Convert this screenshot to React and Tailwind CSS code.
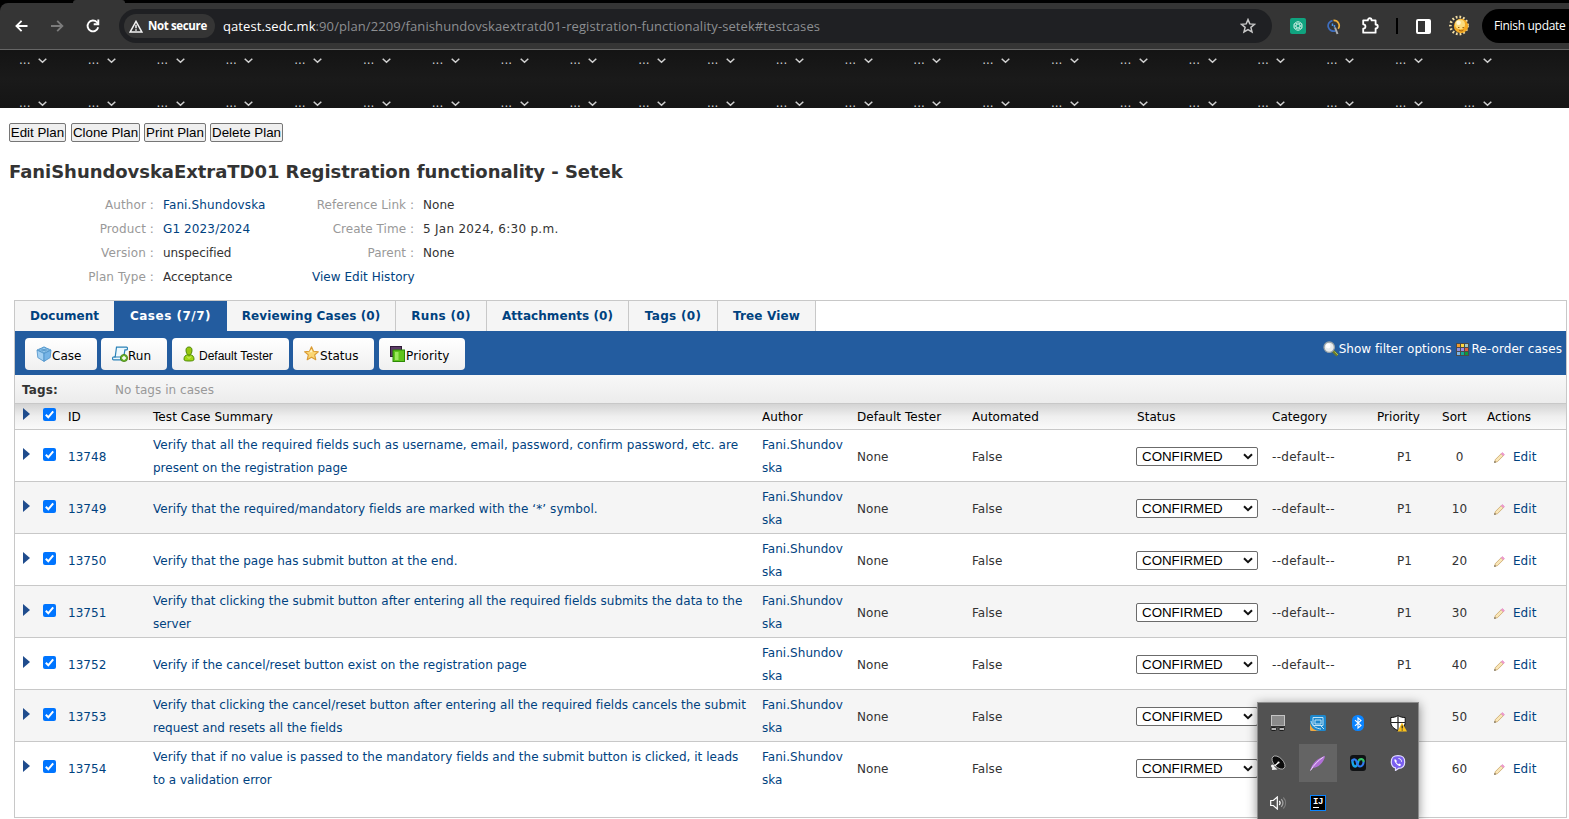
import { Fragment } from "react";

const NAV = Array.from({ length: 22 }, (_, i) => i);

const CASES = [
  { id: 13748, lines: ["Verify that all the required fields such as username, email, password, confirm password, etc. are", "present on the registration page"], sort: 0 },
  { id: 13749, lines: ["Verify that the required/mandatory fields are marked with the ‘*’ symbol."], sort: 10 },
  { id: 13750, lines: ["Verify that the page has submit button at the end."], sort: 20 },
  { id: 13751, lines: ["Verify that clicking the submit button after entering all the required fields submits the data to the", "server"], sort: 30 },
  { id: 13752, lines: ["Verify if the cancel/reset button exist on the registration page"], sort: 40 },
  { id: 13753, lines: ["Verify that clicking the cancel/reset button after entering all the required fields cancels the submit", "request and resets all the fields"], sort: 50 },
  { id: 13754, lines: ["Verify that if no value is passed to the mandatory fields and the submit button is clicked, it leads", "to a validation error"], sort: 60 },
];

const SUMMARY_TRACKING = {
  13748: "tracking-[0.06px]",
  13749: "tracking-[0.075px]",
  13750: "tracking-[0.04px]",
  13751: "tracking-[0.03px]",
  13752: "tracking-[0.045px]",
  13753: "tracking-[0.02px]",
  13754: "tracking-[0.035px]",
};

const TABS = [
  ["Document", "w-[99px]"],
  ["Cases (7/7)", "w-[113px] tracking-[0.5px]"],
  ["Reviewing Cases (0)", "w-[169px] tracking-[0.09px]"],
  ["Runs (0)", "w-[91px] tracking-[0.3px]"],
  ["Attachments (0)", "w-[142px] tracking-[0.07px]"],
  ["Tags (0)", "w-[89px] tracking-[0.3px]"],
  ["Tree View", "w-[98px] tracking-[0.15px]"],
];

function Chevron({ className }) {
  return (
    <svg className={className} width="9" height="6" viewBox="0 0 9 6" fill="none" stroke="#d0d0d0" strokeWidth="1.5">
      <path d="M0.7 0.7 4.5 4.3 8.3 0.7" />
    </svg>
  );
}

function NavRow({ className }) {
  return (
    <div className={`flex ${className}`}>
      {NAV.map((i) => (
        <div key={i} className="flex w-[68.8px] shrink-0 items-start">
          <span className="-mt-[4px] w-[19px] leading-[12px] tracking-normal text-[#d0d0d0]">...</span>
          <Chevron />
        </div>
      ))}
    </div>
  );
}

function BrowserBar() {
  return (
    <div className="h-[50px] bg-black font-['Open_Sans',sans-serif]">
      <div className="flex h-[3px]">
        <div className="ml-[73px] h-[3px] w-[52px] rounded-t-sm bg-[#353535]" />
      </div>
      <div className="flex h-[47px] items-start rounded-tl-[8px] border-b border-[#666] bg-[#353535]">
        <svg className="mt-[17px] ml-[15px]" width="13" height="12" viewBox="0 0 13 12" fill="none" stroke="#fff" strokeWidth="1.8">
          <path d="M12.5 6H1.5M6.6 .8 1.4 6l5.2 5.2" />
        </svg>
        <svg className="mt-[17px] ml-[23px]" width="13" height="12" viewBox="0 0 13 12" fill="none" stroke="#7c7c7c" strokeWidth="1.8">
          <path d="M0 6h11.5M6.2 .8 11.4 6 6.2 11.2" />
        </svg>
        <svg className="mt-[16px] ml-[22px]" width="14" height="14" viewBox="0 0 14 14" fill="none" stroke="#fff" strokeWidth="1.9">
          <path d="M12.2 8.3A5.4 5.4 0 1 1 10.9 3.2L12 4.4" />
          <path d="M12.3 .6v4.6H7.7" />
        </svg>
        <div className="mt-[6px] ml-[19px] flex h-[34px] w-[1153px] items-center rounded-full bg-[#1f2023] pl-[5px]">
          <div className="flex h-[24px] w-[91px] items-center rounded-full bg-[#353535] pl-[5px]">
            <svg width="14" height="13" viewBox="0 0 14 13" fill="none" stroke="#f2f2f2" strokeWidth="1.5">
              <path d="M7 1.4 12.8 11.9H1.2Z" />
              <path d="M7 4.8v3.4M7 9.2v1.5" />
            </svg>
            <span className="ml-[5px] text-[11.5px] font-bold tracking-[-0.36px] whitespace-nowrap text-white">Not secure</span>
          </div>
          <div className="ml-[8px] text-[13px] tracking-[0.09px] whitespace-nowrap text-[#8d8f92]">
            <span className="text-white">qatest.sedc.mk</span>:90/plan/2209/fanishundovskaextratd01-registration-functionality-setek#testcases
          </div>
          <svg className="mr-[16px] ml-auto" width="16" height="16" viewBox="0 0 16 16" fill="none" stroke="#c8c8c8" strokeWidth="1.5">
            <path d="m8 1.6 1.8 4.3 4.7.4-3.6 3 1.1 4.6L8 11.5l-4 2.4 1.1-4.6-3.6-3 4.7-.4Z" />
          </svg>
        </div>
        <svg className="mt-[15px] ml-[18px]" width="16" height="16" viewBox="0 0 16 16">
          <rect width="16" height="16" rx="2" fill="#10a37f" />
          <g fill="none" stroke="#b5e6d8" strokeWidth=".8">
            <circle cx="8" cy="8" r="4.3" />
            <ellipse cx="8" cy="8" rx="4.4" ry="1.8" transform="rotate(30 8 8)" />
            <ellipse cx="8" cy="8" rx="4.4" ry="1.8" transform="rotate(90 8 8)" />
            <ellipse cx="8" cy="8" rx="4.4" ry="1.8" transform="rotate(150 8 8)" />
          </g>
        </svg>
        <svg className="mt-[15px] ml-[21px]" width="14" height="18" viewBox="0 0 14 18" fill="none" strokeWidth="1.7">
          <path d="M8.5 12.7A5.3 5.3 0 1 1 5.5 2.600" stroke="#3f6fc0" />
          <path d="M6.500 2.300A5.400 5.400 0 0 1 11.200 10.800" stroke="#eeb13c" />
          <path d="m8 9.500 2.500 6.500" stroke="#a9adb3" strokeWidth="2" />
          <path d="M5.500 5.500v2.500M7.500 7v2.500" stroke="#4d95e8" strokeWidth="1.500" />
        </svg>
        <svg className="mt-[14px] ml-[21px]" width="17" height="17" viewBox="0 0 17 17" fill="none" stroke="#fff" strokeWidth="1.8" strokeLinejoin="round">
          <path d="M1.2 3.4h4.6c0-2.900 3.800-2.900 3.800 0h4v4.100c2.900 0 2.900 3.800 0 3.800v4.400H1.200v-4c3-.3 3-4.200 0-4.400Z" />
        </svg>
        <div className="mt-[15px] ml-[17px] h-[16px] w-[2px] bg-black" />
        <svg className="mt-[16px] ml-[18px]" width="15" height="15" viewBox="0 0 15 15">
          <rect x="1" y="1" width="13" height="13" rx="1" fill="#353535" stroke="#fff" strokeWidth="2" />
          <rect x="9" y="1" width="5" height="13" fill="#fff" />
        </svg>
        <svg className="mt-[12px] ml-[18px]" width="21" height="21" viewBox="0 0 21 21">
          <circle cx="10" cy="10.5" r="8.6" fill="none" stroke="#f4dfa4" strokeWidth="2.600" strokeDasharray="1.700 2" />
          <circle cx="12" cy="11" r="7.200" fill="#f2a922" />
          <circle cx="11" cy="9.400" r="5" fill="#fbdc7c" />
          <circle cx="9.600" cy="7.800" r="2.200" fill="#fff6d4" />
          <path d="M9 12.500h1.400M13.500 12.500h1.400M10 15c1.400 1.200 3 1.200 4.400 0" stroke="#9a5a10" strokeWidth="1" fill="none" />
        </svg>
        <div className="mt-[6px] ml-[12px] flex h-[34px] flex-1 items-center rounded-l-full bg-black pl-[12px] text-[12px] tracking-[-0.32px] whitespace-nowrap text-white">
          Finish update
        </div>
      </div>
    </div>
  );
}

function PlanButton({ children, className }) {
  return (
    <button className={`flex h-[19px] items-center justify-center rounded-[2px] border border-[#767676] bg-[#efefef] font-['Liberation_Sans',sans-serif] text-[13.33px] whitespace-nowrap text-black ${className}`}>
      {children}
    </button>
  );
}

function MetaGrid() {
  const rows = [
    ["Author :", "Fani.Shundovska", true, "Reference Link :", "None"],
    ["Product :", "G1 2023/2024", true, "Create Time :", "5 Jan 2024, 6:30 p.m."],
    ["Version :", "unspecified", false, "Parent :", "None"],
    ["Plan Type :", "Acceptance", false, null, null],
  ];
  return (
    <div className="mt-[9px] grid grid-cols-[154px_149px_111px_300px] leading-[24px] whitespace-nowrap">
      {rows.map(([a, b, link, c, d]) => (
        <Fragment key={a}>
          <div className="text-right tracking-[0.1px] text-[#999]">{a}</div>
          <div className={`pl-[9px] ${link ? "tracking-[0.12px] text-[#00427f]" : "tracking-[-0.06px]"}`}>{b}</div>
          {c ? <div className="text-right text-[#999]">{c}</div> : <div className="pl-[9px] text-[#00427f]">View Edit History</div>}
          <div className={`pl-[9px] ${d && d.length > 5 ? "tracking-[0.28px]" : ""}`}>{d}</div>
        </Fragment>
      ))}
    </div>
  );
}

function CubeIcon() {
  return (
    <svg width="16" height="16" viewBox="0 0 16 16" stroke="#4a90c8" strokeWidth=".8" strokeLinejoin="round">
      <path d="M8 1 15 4 8 7.5 1 4Z" fill="#cfe8fa" />
      <path d="M1 4 8 7.5V15.400L1.800 11.600Z" fill="#a3d0f2" />
      <path d="M15 4 8 7.500V15.400L14.200 11.600Z" fill="#76b4e6" />
      <ellipse cx="8" cy="2.400" rx="2" ry="1.200" fill="#9fd0f2" />
      <ellipse cx="4.800" cy="4" rx="1.800" ry="1" fill="#9fd0f2" />
      <ellipse cx="11.200" cy="4" rx="1.800" ry="1" fill="#9fd0f2" />
      <ellipse cx="8" cy="5.400" rx="1.800" ry="1" fill="#9fd0f2" />
    </svg>
  );
}
function ScriptIcon() {
  return (
    <svg width="16" height="16" viewBox="0 0 16 16">
      <path d="M4.500 1.200h10c1.400 0 1.200 2.600 0 2.600h-1.600l-1.600 10H1.600C0 13.800.2 11 1.800 11h1.400Z" fill="#eef8fd" stroke="#2a82b8" strokeWidth="1.200" />
      <path d="M1.800 11h7v2.600" fill="none" stroke="#2a82b8" strokeWidth="1.100" />
      <circle cx="12" cy="12" r="3.600" fill="#6fb52c" stroke="#3f7d10" strokeWidth=".8" />
      <path d="M12 10v4M10 12h4" stroke="#fff" strokeWidth="1.400" />
    </svg>
  );
}
function UserIcon() {
  return (
    <svg width="12" height="16" viewBox="0 0 12 16" stroke="#4f8a08" strokeWidth="1">
      <path d="M1 13.200C1 10.500 2.600 9 4.400 8.800h3.200C9.400 9 11 10.500 11 13.200c0 1.600-1.600 1.800-5 1.800s-5-.2-5-1.800Z" fill="#a0d613" />
      <path d="M3 4.200C3 2 4.200 1 6 1s3 1 3 3.200C9 6.800 7.700 9.200 6 9.200S3 6.800 3 4.200Z" fill="#98c70f" />
      <path d="M4 10.500 6 12.500 8 10.500" fill="none" stroke="#d7f27b" />
    </svg>
  );
}
function StarIcon() {
  return (
    <svg width="15" height="15" viewBox="0 0 16 16">
      <path d="m8 .9 2.100 4.700 5.200.5-3.900 3.400 1.200 5.200L8 12l-4.600 2.700 1.200-5.200L.7 6.100l5.200-.5Z" fill="#fbd672" stroke="#d99a33" strokeWidth="1.200" strokeLinejoin="round" />
      <path d="m8 3.400 1 3.200H5.500Z" fill="#fff2c4" />
    </svg>
  );
}
function PriorityIcon() {
  return (
    <svg width="15" height="16" viewBox="0 0 15 16">
      <rect x=".5" y=".5" width="11" height="10" fill="#5c3a66" stroke="#2f1b38" />
      <rect x="3" y="4" width="11.500" height="11.500" fill="#5fc41c" stroke="#2d8a05" />
      <rect x="5" y="6" width="3.500" height="8" fill="#9be85c" />
    </svg>
  );
}

const TOOLS = [
  ["Case", CubeIcon, "w-[72px] pl-[11px]", "ml-0"],
  ["Run", ScriptIcon, "ml-[4px] w-[66px] pl-[11px]", "ml-0"],
  ["Default Tester", UserIcon, "ml-[5px] w-[117px] pl-[11px]", "ml-[4px] font-['Liberation_Sans',sans-serif] tracking-normal"],
  ["Status", StarIcon, "ml-[4px] w-[81px] pl-[11px]", "ml-px"],
  ["Priority", PriorityIcon, "ml-[5px] w-[86px] pl-[11px]", "ml-px tracking-[0.1px]"],
];

function Toolbar() {
  return (
    <div className="flex h-[44px] items-start bg-[#235c9f] pt-[7px] pl-[10px]">
      <div className="flex">
        {TOOLS.map(([label, Icon, box, text]) => (
          <button key={label} className={`flex h-[32px] items-center rounded-[4px] bg-linear-to-b from-white to-[#f0f0f0] whitespace-nowrap text-black ${box}`}>
            <span className="-mt-px"><Icon /></span>
            <span className={`mt-[3px] ${text}`}>{label}</span>
          </button>
        ))}
      </div>
      <div className="mt-[2px] ml-auto flex items-center pr-[4px] whitespace-nowrap text-white">
        <svg width="16" height="16" viewBox="0 0 16 16">
          <path d="m10 10 4.500 4.500" stroke="#6d7a2a" strokeWidth="3" />
          <path d="m11.500 10.500 3.500 3.500" stroke="#a9c24a" strokeWidth="1" />
          <circle cx="6.200" cy="6.200" r="5.200" fill="#e9ecec" stroke="#9aa3a6" strokeWidth="1.300" />
          <circle cx="5.200" cy="5" r="2.400" fill="#fff" />
        </svg>
        <span>Show filter options</span>
        <svg className="mt-px ml-[5px]" width="13" height="13" viewBox="0 0 13 13">
          <rect width="13" height="13" fill="#4a4a4a" />
          <rect x="1" y="1" width="3" height="3" fill="#f29a2e" /><rect x="5" y="1" width="3" height="3" fill="#ffd83a" /><rect x="9" y="1" width="3" height="3" fill="#9fc9c4" />
          <rect x="1" y="5" width="3" height="3" fill="#9090e0" /><rect x="5" y="5" width="3" height="3" fill="#a08ae6" /><rect x="9" y="5" width="3" height="3" fill="#e0603c" />
          <rect x="1" y="9" width="3" height="3" fill="#7cb4e8" /><rect x="5" y="9" width="3" height="3" fill="#12a89a" /><rect x="9" y="9" width="3" height="3" fill="#0e9a3e" />
        </svg>
        <span className="ml-[2px] tracking-[0.08px]">Re-order cases</span>
      </div>
    </div>
  );
}

function RowMarks() {
  return (
    <div className="flex w-[53px] shrink-0 items-center pb-[5px] pl-[8px]">
      <svg width="7" height="12" viewBox="0 0 7 12"><path d="M0 0 7 6 0 12Z" fill="#1f4c8d" /></svg>
      <svg className="ml-[13px]" width="13" height="13" viewBox="0 0 13 13">
        <rect width="13" height="13" rx="2" fill="#0075ff" />
        <path d="m2.800 6.700 2.500 2.600 4.900-6" fill="none" stroke="#fff" strokeWidth="2" />
      </svg>
    </div>
  );
}

function Select() {
  return (
    <div className="flex h-[19px] w-[122px] items-center justify-between rounded-[2px] border border-[#6b6b6b] bg-white pr-[4px] pl-[5px] font-['Liberation_Sans',sans-serif] text-[13.33px] tracking-normal text-black">
      <span>CONFIRMED</span>
      <svg width="10" height="7" viewBox="0 0 10 7" fill="none" stroke="#111" strokeWidth="2"><path d="M1 1.200 5 5.200 9 1.200" /></svg>
    </div>
  );
}

function HeaderRow() {
  return (
    <div className="flex h-[27px] items-center border-t border-b border-[#c8c8c8] bg-linear-to-b from-[#d4d4d4] via-[#efefef] to-[#fafafa] whitespace-nowrap text-black">
      <RowMarks />
      <div className="w-[85px]">ID</div>
      <div className="w-[609px] tracking-[0.08px]">Test Case Summary</div>
      <div className="w-[95px]">Author</div>
      <div className="w-[115px]">Default Tester</div>
      <div className="w-[165px]">Automated</div>
      <div className="w-[135px]">Status</div>
      <div className="w-[105px]">Category</div>
      <div className="w-[65px]">Priority</div>
      <div className="w-[45px]">Sort</div>
      <div>Actions</div>
    </div>
  );
}

function CaseRow({ item, striped, last }) {
  return (
    <div className={`flex h-[52px] shrink-0 items-center border-b pt-[2px] whitespace-nowrap ${striped ? "bg-[#f5f5f5]" : "bg-white"} ${last ? "border-white" : "border-[#c8c8c8]"}`}>
      <RowMarks />
      <div className="w-[85px] text-[#00427f]">{item.id}</div>
      <div className={`w-[609px] leading-[23px] text-[#00427f] ${item.lines.length === 1 ? "pt-px" : ""}`}>
        {item.lines.map((l, i) => <div key={l} className={i === 0 ? SUMMARY_TRACKING[item.id] : "tracking-[-0.01px]"}>{l}</div>)}
      </div>
      <div className="w-[95px] leading-[23px] text-[#00427f]">Fani.Shundov<br />ska</div>
      <div className="w-[115px]">None</div>
      <div className="w-[164px]">False</div>
      <div className="w-[136px]"><Select /></div>
      <div className="w-[105px] tracking-[0.3px]">--default--</div>
      <div className="w-[55px] text-center">P1</div>
      <div className="w-[55px] text-center">{item.sort}</div>
      <div className="flex items-center pl-[7px]">
        <svg className="mt-px" width="11" height="11" viewBox="0 0 11 11">
          <path d="m.6 10.400.8-2.900L7.200 1.700l2.100 2.100-5.800 5.800Z" fill="#f9e6b8" stroke="#c9a566" strokeWidth=".8" />
          <path d="M7.200 1.700 8.400.5l2.100 2.100-1.200 1.200Z" fill="#f39ad0" stroke="#dd86bd" strokeWidth=".6" />
          <path d="m.3 10.700.5-1.600 1.100 1.100Z" fill="#333" />
        </svg>
        <span className="ml-[8px] text-[#00427f]">Edit</span>
      </div>
    </div>
  );
}

const TRAY = [
  <svg key="touchpad" width="16" height="16" viewBox="0 0 16 16" stroke="#1d1d1d"><rect x="1.500" y=".5" width="13" height="10.500" fill="#8b8b8b" stroke="#c4c4c4" /><path d="M1 11.700h14" /><rect x="1" y="12.500" width="5.500" height="3" rx="1" fill="#b5b5b5" /><rect x="9" y="12.500" width="5.500" height="3" rx="1" fill="#b5b5b5" /></svg>,
  <svg key="graphics" width="16" height="16" viewBox="0 0 16 16"><rect width="16" height="16" rx="1.500" fill="#1d87cc" /><path d="M0 8C1 13 5 16 10 16H1.500Q0 16 0 14.500Z" fill="#f2a83c" /><path d="M3 2.500h10v8H3ZM5 5h6v4H5ZM1 6c1 5 5 7.500 10 8M11 11l3 3" fill="none" stroke="#bfe3f7" strokeWidth="1" /></svg>,
  <svg key="bluetooth" width="12" height="16" viewBox="0 0 12 16"><rect width="12" height="16" rx="5.500" fill="#0a84ff" /><path d="m3 5.200 6 5.400L6 13V3l3 2.400-6 5.400" fill="none" stroke="#fff" strokeWidth="1.100" /></svg>,
  <svg key="shield" width="17" height="17" viewBox="0 0 17 17"><path d="M8 .5C6 2 3.500 2.500.8 2.500v5C.8 11 4 14 8 15.500 12 14 15.200 11 15.200 7.500v-5C12.500 2.500 10 2 8 .5Z" fill="#fff" stroke="#111" /><path d="M8 1v14M1 7.500h14" stroke="#222" strokeWidth="1.200" /><path d="M12 7.500 17 16.500H7.500Z" fill="#fcc21b" /><path d="M12.200 10.500v3M12.200 14.400v1.200" stroke="#222" strokeWidth="1.200" /></svg>,
  <svg key="dish" width="16" height="16" viewBox="0 0 16 16"><ellipse cx="8.500" cy="7.500" rx="8" ry="4.600" transform="rotate(46 8.500 7.500)" fill="#0b0b0b" stroke="#c0c0c0" strokeWidth=".8" /><path d="M8 8 4.500 11" stroke="#fff" strokeWidth="1.200" /><circle cx="8.500" cy="7.500" r="1.100" fill="#fff" /><path d="M2.500 10 7.500 14.500 2 15Z" fill="#eee" /><circle cx="2.500" cy="11" r="1.500" fill="#f4f4f4" /></svg>,
  <svg key="feather" width="16" height="16" viewBox="0 0 16 16"><path d="M.5 15.500C1 10 6 4 15 .8 14.500 6 10 12 3 13Z" fill="#b06fd6" /><path d="M.5 15.500C4 9.500 8 5.500 13.500 2" fill="none" stroke="#eed8fa" strokeWidth="1" /></svg>,
  <svg key="webex" width="16" height="16" viewBox="0 0 16 16"><rect width="16" height="16" rx="3" fill="#101214" /><path d="M2.400 5.500c.2 4 1 6 2.600 6 2.200 0 2.500-3 3.300-5" fill="none" stroke="#19a8ea" strokeWidth="2.400" strokeLinecap="round" /><path d="M2.400 5.500c.8-1.600 3.200-1.600 4 .5C7.400 9 7.500 11.500 10 11.500c2.200 0 3.500-2.500 3.600-5" fill="none" stroke="#2f7cf0" strokeWidth="2.200" strokeLinecap="round" /><path d="M9 5c1.600-1.500 4.300-1.200 4.600 1" fill="none" stroke="#35c46a" strokeWidth="2.200" strokeLinecap="round" /></svg>,
  <svg key="viber" width="16" height="16" viewBox="0 0 16 16"><path d="M8 .7c5 0 6.700 1.700 6.700 6.300S13 13.400 8.500 13.400L5.500 15.500v-2.600C2.300 12.200 1.300 10.500 1.300 7 1.300 2.400 3 .7 8 .7Z" fill="#7a5fef" stroke="#e3ddff" strokeWidth="1.200" /><path d="M5 4c-.9.6-.8 1.700 0 3 1 1.900 2.300 3.100 4.200 3.900 1 .3 1.800-.8 1.700-1.300L9.200 8.500l-.9.700C7.300 8.700 6.700 8 6.300 7l.7-.9Z" fill="#fff" /><path d="M8.500 3.500c1.900.2 3 1.300 3 3.200" fill="none" stroke="#fff" /></svg>,
  <svg key="volume" width="17" height="14" viewBox="0 0 17 14" fill="none" stroke="#fff" strokeWidth="1.200"><path d="M.7 4.500h2.600l4-3.500v12l-4-3.500H.7Z" /><path d="M9.300 5c1 1.200 1 2.800 0 4" /><path d="M11.300 3.200c2 2.300 2 5.300 0 7.600" stroke="#a5a5a5" /><path d="M13.300 1.500c3 3.300 3 7.700 0 11" stroke="#7e7e7e" /></svg>,
  <div key="ide" className="flex size-[16px] flex-col border border-[#0a84ff] bg-black pt-[2px] pl-[2px] font-['Liberation_Mono',monospace] text-[9px] leading-[8px] font-bold tracking-[-0.5px] text-white">IJ<i className="mt-px h-px w-[6px] bg-white" /></div>,
];

function Tray() {
  return (
    <div className="absolute top-[702px] left-[1257px] grid h-[117px] w-[162px] grid-cols-[repeat(4,40px)] grid-rows-[repeat(3,40px)] overflow-hidden border border-b-0 border-[#8c8c8c] bg-[#525252] shadow-[0_2px_10px_rgba(0,0,0,0.45)]">
      {TRAY.map((icon, i) => (
        <div key={i} className="flex items-center justify-center">
          <div className={`flex size-[38px] items-center justify-center ${i === 5 ? "bg-[#646464]" : ""}`}>{icon}</div>
        </div>
      ))}
    </div>
  );
}

export default function App() {
  return (
    <div className="relative flex h-[819px] w-[1569px] flex-col overflow-hidden bg-white font-['DejaVu_Sans',sans-serif] text-[12px] leading-[18px] tracking-[0.035px] text-[#333]">
      <BrowserBar />
      <div className="h-[58px] shrink-0 overflow-hidden bg-linear-to-b from-[#141414] via-[#1a1a1a] to-[#151515] pl-[19px]">
        <NavRow className="mt-[8px] h-[43px]" />
        <NavRow className="h-[10px]" />
      </div>
      <div className="mt-[15px] ml-[9px] flex shrink-0 tracking-normal">
        <PlanButton className="w-[57px]">Edit Plan</PlanButton>
        <PlanButton className="ml-[5px] w-[69px]">Clone Plan</PlanButton>
        <PlanButton className="ml-[4px] w-[62px]">Print Plan</PlanButton>
        <PlanButton className="ml-[4px] w-[73px]">Delete Plan</PlanButton>
      </div>
      <h1 className="mt-[18px] ml-[9px] text-[18px] leading-[24px] font-bold tracking-[-0.045px] whitespace-nowrap">
        FaniShundovskaExtraTD01 Registration functionality - Setek
      </h1>
      <MetaGrid />
      <div className="mt-[11px] ml-[14px] flex h-[518px] w-[1553px] shrink-0 flex-col border border-[#c8c8c8]">
        <div className="flex h-[30px] shrink-0">
          {TABS.map(([label, w], i) => (
            <div key={label} className={`flex items-center justify-center font-bold whitespace-nowrap ${w} ${i === 1 ? "bg-[#235c9f] text-white" : i === 0 ? "bg-[#f5f5f5] text-[#00427f]" : "border-r border-[#c8c8c8] bg-[#f5f5f5] text-[#00427f]"}`}>
              {label}
            </div>
          ))}
        </div>
        <Toolbar />
        <div className="flex h-[28px] shrink-0 items-center bg-linear-to-b from-[#f8f8f8] to-[#ececec] pt-[2px] pl-[7px]">
          <div className="w-[93px] font-bold tracking-[0.15px]">Tags:</div>
          <div className="text-[#999]">No tags in cases</div>
        </div>
        <HeaderRow />
        {CASES.map((c, i) => <CaseRow key={c.id} item={c} striped={i % 2 === 1} last={i === 6} />)}
      </div>
      <Tray />
    </div>
  );
}
